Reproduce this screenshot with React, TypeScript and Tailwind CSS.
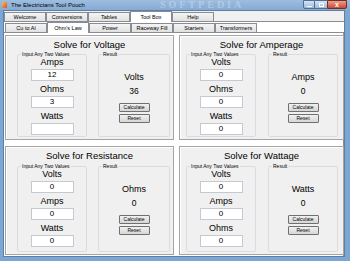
import React from "react";

const sans = "font-['Liberation_Sans',Arial,sans-serif]";

const outerTabs = ["Welcome", "Conversions", "Tables", "Tool Box", "Help"];
const innerTabs = ["Cu to Al", "Ohm's Law", "Power", "Raceway Fill", "Starters", "Transformers"];

export default function App() {
  return (
    <div className={`w-[350px] h-[261px] overflow-hidden bg-[#7ea6d2] flex flex-col ${sans}`}>
      <TitleBar />
      <div className="flex-1 ml-[3px] mr-[5px] mb-[4px] bg-[#f0f0f0] border border-[#5a7fa8] flex flex-col">
        <div className="flex h-[10px] items-end">
          {outerTabs.map((t) => (
            <Tab key={t} label={t} active={t === "Tool Box"} />
          ))}
        </div>
        <div className="flex-1 bg-white border-t border-[#898c95] flex flex-col">
          <div className="flex h-[10px] items-end pl-[1px]">
            {innerTabs.map((t) => (
              <Tab key={t} label={t} active={t === "Ohm's Law"} />
            ))}
          </div>
          <div className="flex-1 bg-white border-t border-r border-[#898c95] pl-[1px] pr-[1px] pt-[2px]">
            <div className="grid grid-cols-[169px_165px] gap-x-[5px] gap-y-[6px]">
              <Panel
                title="Solve for Voltage"
                fields={[["Amps", "12"], ["Ohms", "3"], ["Watts", ""]]}
                result="Volts"
                value="36"
                h="h-[105px]"
                pad="pl-[11px] pr-[3px] gap-x-[11px]"
              />
              <Panel
                title="Solve for Amperage"
                fields={[["Volts", "0"], ["Ohms", "0"], ["Watts", "0"]]}
                result="Amps"
                value="0"
                h="h-[105px]"
                pad="pl-[6px] pr-[5px] gap-x-[12px]"
              />
              <Panel
                title="Solve for Resistance"
                fields={[["Volts", "0"], ["Amps", "0"], ["Watts", "0"]]}
                result="Ohms"
                value="0"
                h="h-[109px]"
                pad="pl-[11px] pr-[3px] gap-x-[11px]"
              />
              <Panel
                title="Solve for Wattage"
                fields={[["Volts", "0"], ["Amps", "0"], ["Ohms", "0"]]}
                result="Watts"
                value="0"
                h="h-[109px]"
                pad="pl-[6px] pr-[5px] gap-x-[12px]"
              />
            </div>
          </div>
        </div>
      </div>
    </div>
  );
}

function TitleBar() {
  return (
    <div className="h-[10px] relative flex items-center bg-gradient-to-b from-[#9dbde0] to-[#86aad2] shrink-0">
      {/* watermark */}
      <div className="absolute left-[160px] top-0 text-[10px] leading-[10px] tracking-[3px] text-white/30 font-['Liberation_Serif',serif] font-bold select-none">
        SOFTPEDIA
      </div>
      <div className="ml-[2px] w-[5px] h-[6px] bg-gradient-to-br from-[#f6c343] to-[#d9462b] rounded-[1px]" />
      <span className="ml-[4px] text-[6px] leading-none text-black relative">The Electricians Tool Pouch</span>
      <div className="ml-auto mr-[3px] flex self-start h-[9px] relative">
        <div className="w-[12px] border border-[#4d6d94] rounded-bl-[2px] bg-gradient-to-b from-[#d6e4f3] to-[#9fb9d8] flex items-center justify-center">
          <div className="w-[5px] h-[1px] bg-white mt-[3px]" />
        </div>
        <div className="w-[12px] border-y border-[#4d6d94] bg-gradient-to-b from-[#d6e4f3] to-[#9fb9d8] flex items-center justify-center">
          <div className="w-[5px] h-[4px] border border-white" />
        </div>
        <div className="w-[20px] border border-[#7a2a20] rounded-br-[2px] bg-gradient-to-b from-[#e8a08e] to-[#c64a33] flex items-center justify-center text-white text-[7px] leading-none font-bold">
          x
        </div>
      </div>
    </div>
  );
}

function Tab({ label, active }: { label: string; active: boolean }) {
  return (
    <div
      className={
        active
          ? "w-[42px] h-[11px] -mb-[1px] bg-white border border-b-0 border-[#898c95] text-[5.5px] leading-[10px] text-center text-black relative"
          : "w-[42px] h-[9px] bg-gradient-to-b from-[#f4f4f4] to-[#e1e1e1] border border-b-0 border-[#898c95] text-[5.5px] leading-[8px] text-center text-black"
      }
    >
      {label}
    </div>
  );
}

function Panel({ title, fields, result, value, h, pad }: any) {
  return (
    <div className={`${h} border border-[#a5a5a5] bg-[#f0f0f0] shadow-[inset_1px_1px_0_#ffffff] flex flex-col`}>
      <div className="h-[19px] pt-[3px] text-center text-[9.5px] leading-[12px] text-black">{title}</div>
      <div className={`flex-1 flex pb-[2px] ${pad}`}>
        <Group caption="Input Any Two Values" w="w-[70px]">
          <div className="flex flex-col items-center">
            {fields.map(([lab, v]: string[]) => (
              <div key={lab} className="flex flex-col items-center mb-[1px]">
                <div className="h-[14px] text-[9px] leading-[14px] text-black">{lab}</div>
                <div className="w-[43px] h-[12px] bg-white border border-[#c5c9d1] text-[8px] leading-[10px] text-center text-black">
                  {v}
                </div>
              </div>
            ))}
          </div>
        </Group>
        <Group caption="Result" w="flex-1">
          <div className="flex flex-col items-center pt-[16px]">
            <div className="h-[12px] text-[9px] leading-[12px] text-black">{result}</div>
            <div className="h-[12px] mt-[2px] text-[8.5px] leading-[12px] text-black">{value}</div>
            <Button label="Calculate" cls="mt-[6px]" />
            <Button label="Reset" cls="mt-[2px]" />
          </div>
        </Group>
      </div>
    </div>
  );
}

function Group({ caption, w, children }: any) {
  return (
    <div className={`${w} relative border border-[#d9dde2] rounded-[2px]`}>
      <span className="absolute -top-[4px] left-[3px] bg-[#f0f0f0] px-[1px] text-[5px] leading-[7px] text-black">
        {caption}
      </span>
      {children}
    </div>
  );
}

function Button({ label, cls }: { label: string; cls: string }) {
  return (
    <div
      className={`${cls} w-[31px] h-[9px] border border-[#707070] rounded-[1px] bg-gradient-to-b from-[#f2f2f2] to-[#d6d6d6] text-[5px] leading-[7px] text-center text-black`}
    >
      {label}
    </div>
  );
}
